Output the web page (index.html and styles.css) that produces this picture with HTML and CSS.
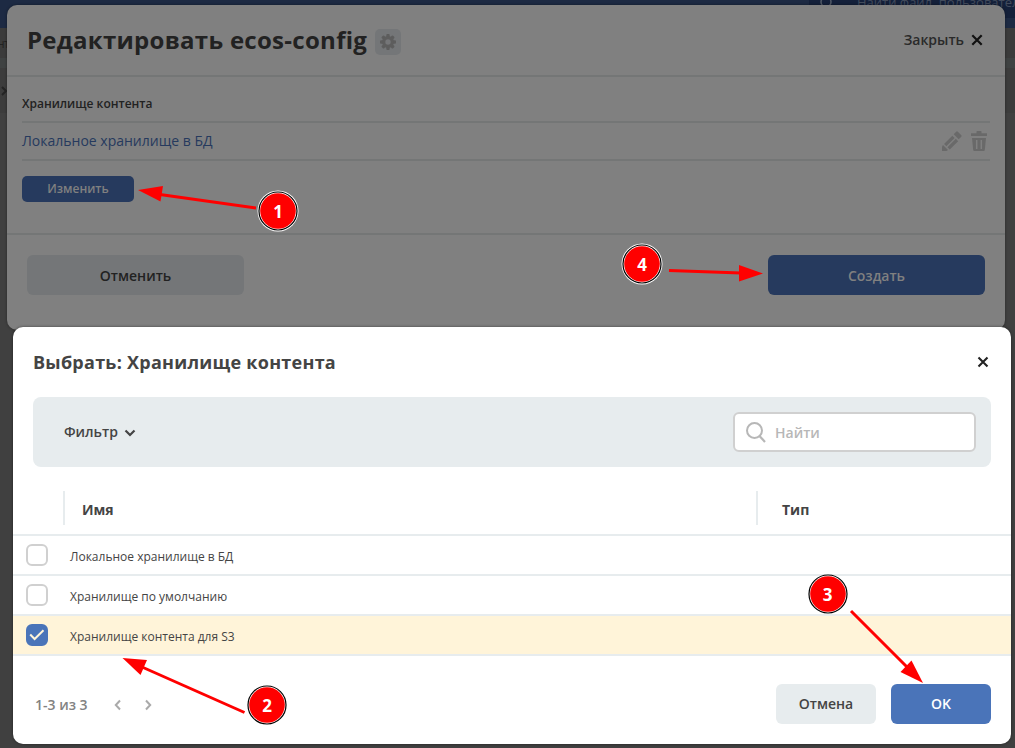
FILE: index.html
```html
<!DOCTYPE html>
<html lang="ru">
<head>
<meta charset="utf-8">
<title>Выбрать: Хранилище контента</title>
<link rel="stylesheet" href="styles.css">
</head>
<body>
<div class="page">
  <header class="topbar">
    <div class="topbar-search">
      <svg width="14" height="14" viewBox="0 0 14 14"><circle cx="7" cy="7" r="5" fill="none" stroke="#525a68" stroke-width="1.5"/></svg>
      <span>Найти файл, пользователя</span>
    </div>
  </header>
  <div class="page-tabs"><span>нт</span></div>
  <div class="page-strip"></div>
  <div class="page-body">
    <svg width="10" height="12" viewBox="0 0 10 12"><path d="M2 2L6 6L2 10" fill="none" stroke="#242424" stroke-width="2"/></svg>
  </div>
</div>

<section class="edit-dialog">
  <header class="edit-header">
    <h1 class="edit-title">Редактировать ecos-config</h1>
    <span class="gear-button">
      <svg width="16" height="16" viewBox="0 0 16 16"><g fill="#5d5d5d"><rect x="6.3" y="0" width="3.4" height="16" rx="1"/><rect x="6.3" y="0" width="3.4" height="16" rx="1" transform="rotate(45 8 8)"/><rect x="6.3" y="0" width="3.4" height="16" rx="1" transform="rotate(90 8 8)"/><rect x="6.3" y="0" width="3.4" height="16" rx="1" transform="rotate(135 8 8)"/><circle cx="8" cy="8" r="6"/></g><circle cx="8" cy="8" r="2.7" fill="#757678"/></svg>
    </span>
    <span class="edit-close">Закрыть
      <svg width="12" height="12" viewBox="0 0 12 12"><path d="M1.300 1.300L10.700 10.700M10.700 1.300L1.300 10.700" stroke="#111" stroke-width="2.200"/></svg>
    </span>
  </header>
  <div class="edit-body">
    <div class="field-label">Хранилище контента</div>
    <div class="field-row">
      <a class="field-link">Локальное хранилище в БД</a>
      <span class="field-actions">
        <svg width="20" height="20" viewBox="0 0 20 20"><path fill="#696969" d="M0 20V15.500L1 14L6 19L4.500 20Z"/><path d="M3.200 14.200L11.500 5.900M6.600 17.400L15 9" stroke="#696969" stroke-width="3.300"/><path fill="#696969" d="M11.700 3.300L14.200 .7Q15 0 15.800 .7L19.300 4.200Q20 5 19.300 5.800L16.700 8.300Z"/></svg>
        <svg width="16" height="20" viewBox="0 0 16 20"><g fill="#696969"><path d="M0 2.200H5.500V.5Q5.500 0 6 0H10Q10.500 0 10.500 .5V2.200H16V5H0Z"/><path d="M1 7H15L13.800 19Q13.700 20 12.700 20H3.300Q2.300 20 2.200 19Z"/></g><path d="M5.700 9V18M10.300 9V18" stroke="#808080" stroke-width="1.500"/></svg>
      </span>
    </div>
    <button class="change-button">Изменить</button>
  </div>
  <footer class="edit-footer">
    <button class="wide-button">Отменить</button>
    <button class="wide-button wide-primary">Создать</button>
  </footer>
</section>

<section class="select-dialog">
  <header class="select-header">
    <h2 class="select-title">Выбрать: Хранилище контента</h2>
    <svg width="12" height="12" viewBox="0 0 12 12"><path d="M1.500 1.500L10.500 10.500M10.500 1.500L1.500 10.500" stroke="#222" stroke-width="2.100"/></svg>
  </header>
  <div class="filter-bar">
    <span class="filter-label"><span>Фильтр</span>
      <svg width="12" height="8" viewBox="0 0 12 8"><path d="M1.500 1.500L6 6L10.500 1.500" fill="none" stroke="#444" stroke-width="2.200"/></svg>
    </span>
    <div class="search-box">
      <svg width="20" height="21" viewBox="0 0 20 21"><circle cx="8.500" cy="8.500" r="7.500" fill="none" stroke="#b7b7b7" stroke-width="2"/><path d="M13.500 14L19 20" stroke="#b7b7b7" stroke-width="2.200"/></svg>
      <span>Найти</span>
    </div>
  </div>
  <div class="grid-head">
    <span class="col-name">Имя</span>
    <span class="col-type">Тип</span>
  </div>
  <div class="grid-row"><span class="checkbox"></span><span class="cell">Локальное хранилище в БД</span></div>
  <div class="grid-row"><span class="checkbox"></span><span class="cell">Хранилище по умолчанию</span></div>
  <div class="grid-row selected">
    <span class="checkbox checked"><svg width="16" height="12" viewBox="0 0 16 12"><path d="M1.200 5.500L5.600 10L14.500 1.200" fill="none" stroke="#fff4d9" stroke-width="2"/></svg></span>
    <span class="cell">Хранилище контента для S3</span>
  </div>
  <footer class="select-footer">
    <span class="pager-text">1-3 из 3</span>
    <svg class="prev" width="7" height="12" viewBox="0 0 7 12"><path d="M6 1.500L1.800 6L6 10.500" fill="none" stroke="#aaa" stroke-width="2"/></svg>
    <svg class="next" width="7" height="12" viewBox="0 0 7 12"><path d="M1 1.500L5.200 6L1 10.500" fill="none" stroke="#aaa" stroke-width="2"/></svg>
    <button class="action-button action-first">Отмена</button>
    <button class="action-button action-primary">OK</button>
  </footer>
</section>

<svg class="annotations" width="1015" height="748" viewBox="0 0 1015 748">
  <g stroke="#f00" stroke-width="3">
    <path d="M256 208L160 194.500"/>
    <path d="M244.500 712.500L142 667"/>
    <path d="M851 611L907 667"/>
    <path d="M669 270.500L741 273"/>
  </g>
  <g fill="#f00">
    <path d="M138 190L163 186L160.500 201.500Z"/>
    <path d="M122.500 658L147 660L140.500 675Z"/>
    <path d="M923 683L911.500 660.500L900.500 672Z"/>
    <path d="M763 273.500L739 265V281.500Z"/>
  </g>
  <g class="badge">
    <circle class="halo" cx="278" cy="211" r="20.500"/><circle class="ring" cx="278" cy="211" r="19"/><circle class="disc" cx="278" cy="211" r="17.800"/><text x="278" y="217.500">1</text>
    <circle class="ring" cx="267" cy="705" r="19"/><circle class="disc" cx="267" cy="705" r="17.800"/><text x="267" y="711.500">2</text>
    <circle class="ring" cx="828" cy="594" r="19"/><circle class="disc" cx="828" cy="594" r="17.800"/><text x="827.500" y="600.500">3</text>
    <circle class="halo" cx="642" cy="264" r="20.500"/><circle class="ring" cx="642" cy="264" r="19"/><circle class="disc" cx="642" cy="264" r="17.800"/><text x="642" y="270.500">4</text>
  </g>
</svg>
</body>
</html>
```
FILE: styles.css
```css
* { box-sizing: border-box; }
body {
  margin: 0;
  width: 1015px;
  height: 748px;
  overflow: hidden;
  position: relative;
  background: #404040;
  font-family: "Open Sans", "Noto Sans", sans-serif;
  font-size: 14px;
  color: #444;
}
h1, h2 { margin: 0; }
svg { display: block; flex: none; }
button { border: 0; padding: 0; font: inherit; font-weight: 600; }

/* dimmed page underneath */
.topbar { height: 28px; background: #1d2a43; display: flex; justify-content: flex-end; }
.topbar-search {
  width: 206px; height: 18px; padding-left: 10px;
  display: flex; gap: 24px; overflow: hidden; white-space: nowrap;
  background: #14203a; color: #424b5c; font-size: 13px; line-height: 5px;
}
.topbar-search svg { margin-top: -5px; }
.page-tabs { height: 30px; background: #3b3b3b; color: #222; line-height: 29px; overflow: hidden; }
.page-tabs span { margin-left: -3px; font-size: 12px; letter-spacing: -.5px; }
.page-strip { height: 10px; background: #3f4242; }
.page-body { height: 45px; background: #3c3c3c; padding-top: 17px; }

/* edit dialog */
.edit-dialog {
  position: absolute; left: 7px; top: 5px; width: 998px; height: 325px;
  background: #808080; border-radius: 10px; color: #222;
  box-shadow: 0 0 3px rgba(0,0,0,.4);
}
.edit-header {
  height: 72px; padding: 0 22px 0 20px; border-bottom: 2px solid #747676;
  display: flex; align-items: center;
}
.edit-title { font-size: 24px; line-height: 32px; letter-spacing: .28px; white-space: nowrap; }
.gear-button {
  width: 26px; height: 26px; margin: 3px 0 0 8px; border-radius: 5px;
  background: #747678; display: grid; place-items: center;
}
.edit-close { margin-left: auto; padding-bottom: 1px; display: flex; align-items: center; gap: 7px; font-weight: 600; line-height: 18px; color: #2a2a2a; }
.edit-close svg { margin-top: 1px; }
.edit-body { height: 158px; padding: 17px 15px 0; border-bottom: 2px solid #747676; }
.field-label { height: 27px; font-size: 12px; line-height: 19px; font-weight: 600; }
.field-row {
  height: 40px; border-top: 2px solid #747676; border-bottom: 2px solid #747676;
  display: flex; align-items: center; justify-content: space-between;
}
.field-link { color: #263a5e; padding-bottom: 2px; }
.field-actions { display: flex; gap: 9px; padding-right: 3px; }
.change-button {
  display: block; width: 112px; height: 26px; margin-top: 15px; padding-bottom: 2px; border-radius: 5px;
  background: #263a5e; color: #808080; font-size: 12px;
}
.edit-footer { padding: 20px; display: flex; justify-content: space-between; }
.wide-button { width: 217px; height: 40px; border-radius: 6px; background: #747678; color: #222; }
.wide-primary { background: #263a5e; color: #808080; }

/* select dialog */
.select-dialog {
  position: absolute; left: 13px; top: 327px; width: 998px; height: 417px;
  background: #fff; border-radius: 10px; box-shadow: 0 0 3px rgba(0,0,0,.5);
}
.select-header { height: 70px; padding: 0 22px 0 20px; display: flex; align-items: center; justify-content: space-between; }
.select-title { font-size: 18px; line-height: 24px; letter-spacing: .26px; }
.filter-bar {
  height: 70px; margin: 0 20px; padding: 0 15px 0 31px; border-radius: 8px;
  background: #e7ecee; display: flex; align-items: center; justify-content: space-between;
}
.filter-label { display: flex; align-items: center; gap: 6px; font-weight: 600; }
.filter-label span { padding-bottom: 2px; }
.filter-label svg { margin-top: 2px; }
.search-box {
  width: 243px; height: 40px; padding-left: 11px; border: 2px solid #d0d0d0; border-radius: 6px;
  background: #fff; color: #b7b7b7; display: flex; align-items: center; gap: 9px;
  font-weight: 600;
}
.grid-head {
  height: 69px; padding: 24px 0 0 50px; border-bottom: 2px solid #e7ecee;
  display: flex; font-weight: 700; line-height: 38px;
}
.grid-head span { height: 34px; border-left: 2px solid #e7ecee; }
.col-name { width: 693px; padding-left: 17px; }
.col-type { padding-left: 24px; }
.grid-row {
  height: 40px; padding-left: 13px; border-bottom: 2px solid #e7ecee;
  display: flex; align-items: center; gap: 22px; font-size: 12px;
}
.cell { padding-top: 2px; }
.selected { background: #fff4d9; }
.checkbox { width: 22px; height: 22px; border: 2px solid #d0d0d0; border-radius: 6px; background: #fff; display: grid; place-items: center; }
.checked { background: #4a74b9; border-color: #4a74b9; }
.select-footer { padding: 28px 20px 0 22px; display: flex; align-items: center; }
.pager-text { color: #828282; width: 79px; font-weight: 600; }
.prev, .next { margin-top: 2px; }
.next { margin-left: 24px; }
.action-button { width: 100px; height: 40px; padding-bottom: 2px; border-radius: 6px; background: #e7ecee; color: #444; }
.action-first { margin-left: auto; }
.action-primary { margin-left: 15px; background: #4a74b9; color: #fff; }

/* numbered callouts */
.annotations { position: absolute; left: 0; top: 0; }
.halo { fill: #fff; }
.ring { fill: #fff; stroke: #000; stroke-width: 1.2; }
.disc { fill: #f00; }
.badge text { fill: #fff; font: 700 17px "Open Sans", sans-serif; text-anchor: middle; }
```
